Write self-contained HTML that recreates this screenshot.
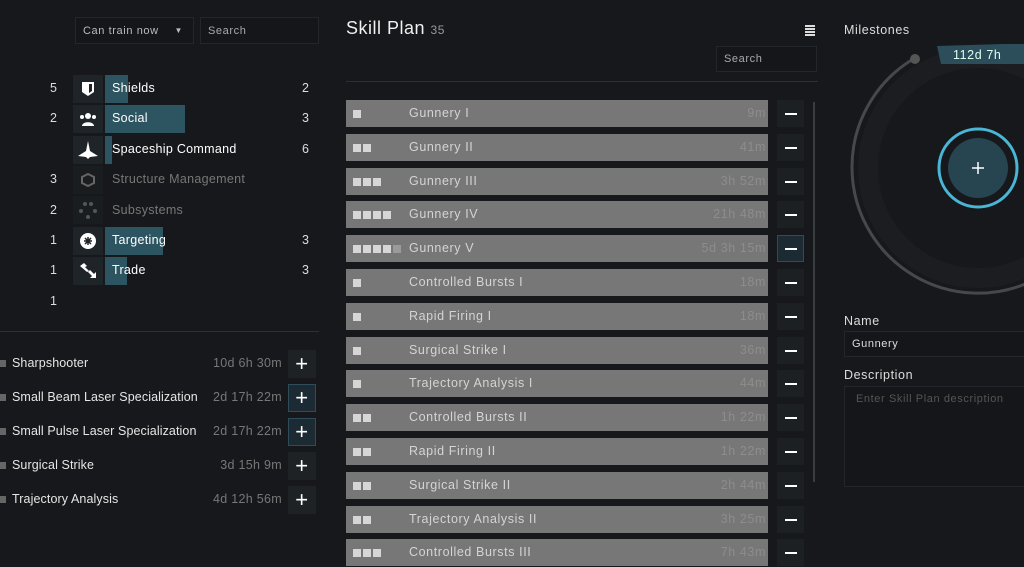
<!DOCTYPE html>
<html><head><style>
*{margin:0;padding:0;box-sizing:border-box}
body{width:1024px;height:567px;background:#16181b;font-family:"Liberation Sans",sans-serif;color:#dcdcdc;position:relative;overflow:hidden;font-size:12px;letter-spacing:.6px}
.a{position:absolute}
.inp{border:1px solid #23262a;background:#141619;color:#aaa;font-size:11px;padding-left:7px;display:flex;align-items:center}
.ic{position:absolute;left:73px;width:30px;height:28px;background:#1f2428;display:flex;align-items:center;justify-content:center;color:#fff;font-size:15px}
.bar{position:absolute;left:105px;height:28px;background:#2d5461}
.cl{position:absolute;left:112px;font-size:12.5px;color:#fff;letter-spacing:.3px}
.num{position:absolute;font-size:12.5px;color:#ddd}
.row{position:absolute;left:346px;width:422px;height:27px;background:#777;}
.row .n{position:absolute;left:63px;top:6px;color:#d4d4d4;font-size:12.5px}
.row .t{position:absolute;right:2px;top:6px;color:#8d8d8d;font-size:12.5px}
.row .sq{position:absolute;top:10px;width:8px;height:8px;background:#d6d6d6}
.mb{position:absolute;left:777px;width:27px;height:27px;background:#1d2023;display:flex;align-items:center;justify-content:center}
.mb i{width:12px;height:2px;background:#fff}
.bl{position:absolute;left:12px;font-size:12.5px;color:#e6e6e6;letter-spacing:.1px}
.bt{position:absolute;right:742px;font-size:12.5px;color:#777;letter-spacing:.3px}
.pb{position:absolute;left:288px;width:28px;height:28px;background:#1e2225;color:#fff;font-size:22px;display:flex;align-items:center;justify-content:center}
.bsq{position:absolute;left:0;width:6px;height:7px;background:#666}
</style></head><body>
<div class="a inp" style="left:75px;top:17px;width:119px;height:27px;color:#bbb">Can train now<span style="position:absolute;right:10px;font-size:8px">▼</span></div>
<div class="a inp" style="left:200px;top:17px;width:119px;height:27px">Search</div>

<div class="bar" style="top:75px;width:23px"></div>
<div class="bar" style="top:105px;width:80px"></div>
<div class="bar" style="top:136px;width:7px"></div>
<div class="bar" style="top:227px;width:58px"></div>
<div class="bar" style="top:257px;width:22px"></div>
<div class="ic" style="top:75px"><svg width="14" height="16"><path d="M1 1h12v10l-6 4-6-4z" fill="#fff"/><path d="M8 3h3v7l-3 2z" fill="#1f2428"/></svg></div>
<div class="ic" style="top:105px"><svg width="18" height="14" fill="#fff"><circle cx="9" cy="4" r="3"/><path d="M3 14c0-5 12-5 12 0z"/><circle cx="3" cy="5" r="2"/><circle cx="15" cy="5" r="2"/></svg></div>
<div class="ic" style="top:136px"><svg width="20" height="18" fill="#fff"><path d="M10 0l2 10 8 5-8 1-2 2-2-2-8-1 8-5z"/></svg></div>
<div class="ic" style="top:166px;background:#1a1d20"><svg width="14" height="14" fill="none" stroke="#666" stroke-width="2"><path d="M7 1l6 3v6l-6 3-6-3V4z"/></svg></div>
<div class="ic" style="top:196px;background:#1a1d20"><svg width="18" height="18" fill="#555"><circle cx="6" cy="3" r="2"/><circle cx="12" cy="3" r="2"/><circle cx="2" cy="10" r="2"/><circle cx="16" cy="10" r="2"/><circle cx="9" cy="16" r="2"/></svg></div>
<div class="ic" style="top:227px"><svg width="16" height="16"><circle cx="8" cy="8" r="8" fill="#fff"/><path d="M8 4v8M4 8h8M5 5l6 6M11 5l-6 6" stroke="#1f2428" stroke-width="1.5"/></svg></div>
<div class="ic" style="top:257px"><svg width="18" height="16" fill="#fff"><path d="M1 3l4-3 3 3-2 1 4 4-2 1z"/><path d="M17 9v6h-6l2-2-4-4 2-2 4 4z"/></svg></div>
<div class="cl" style="top:81px">Shields</div><div class="cl" style="top:111px">Social</div><div class="cl" style="top:142px">Spaceship Command</div>
<div class="cl" style="top:172px;color:#777">Structure Management</div><div class="cl" style="top:203px;color:#777">Subsystems</div>
<div class="cl" style="top:233px">Targeting</div><div class="cl" style="top:263px">Trade</div>
<div class="num" style="left:50px;top:81px">5</div><div class="num" style="left:50px;top:111px">2</div><div class="num" style="left:50px;top:172px">3</div><div class="num" style="left:50px;top:203px">2</div><div class="num" style="left:50px;top:233px">1</div><div class="num" style="left:50px;top:263px">1</div><div class="num" style="left:50px;top:294px">1</div>
<div class="num" style="left:302px;top:81px">2</div><div class="num" style="left:302px;top:111px">3</div><div class="num" style="left:302px;top:142px">6</div><div class="num" style="left:302px;top:233px">3</div><div class="num" style="left:302px;top:263px">3</div>
<div class="a" style="left:0;top:331px;width:319px;height:1px;background:#2a3236"></div>

<div class="bsq" style="top:360px"></div><div class="bl" style="top:356px">Sharpshooter</div><div class="bt" style="top:356px">10d 6h 30m</div><div class="pb" style="top:350px">+</div>
<div class="bsq" style="top:394px"></div><div class="bl" style="top:390px">Small Beam Laser Specialization</div><div class="bt" style="top:390px">2d 17h 22m</div><div class="pb" style="top:384px;background:#1b2a33;border:1px solid #2f4c5a">+</div>
<div class="bsq" style="top:428px"></div><div class="bl" style="top:424px">Small Pulse Laser Specialization</div><div class="bt" style="top:424px">2d 17h 22m</div><div class="pb" style="top:418px;background:#1b2a33;border:1px solid #2f4c5a">+</div>
<div class="bsq" style="top:462px"></div><div class="bl" style="top:458px">Surgical Strike</div><div class="bt" style="top:458px">3d 15h 9m</div><div class="pb" style="top:452px">+</div>
<div class="bsq" style="top:496px"></div><div class="bl" style="top:492px">Trajectory Analysis</div><div class="bt" style="top:492px">4d 12h 56m</div><div class="pb" style="top:486px">+</div>

<div class="a" style="left:346px;top:18px;font-size:18px;color:#f0f0f0;letter-spacing:.5px">Skill Plan <span style="font-size:12px;color:#999">35</span></div>
<div class="a" style="left:805px;top:25px;width:10px"><div style="height:2px;background:#ddd;margin-bottom:1px"></div><div style="height:2px;background:#ddd;margin-bottom:1px"></div><div style="height:2px;background:#ddd;margin-bottom:1px"></div><div style="height:2px;background:#ddd"></div></div>
<div class="a inp" style="left:716px;top:46px;width:101px;height:26px">Search</div>
<div class="a" style="left:346px;top:81px;width:472px;height:1px;background:#283236"></div>
<div class="a" style="left:813px;top:102px;width:2px;height:380px;background:#3a3d40"></div>

<div id="rows"></div>
<script>
var d=[["Gunnery I","9m",1],["Gunnery II","41m",2],["Gunnery III","3h 52m",3],["Gunnery IV","21h 48m",4],["Gunnery V","5d 3h 15m",5],["Controlled Bursts I","18m",1],["Rapid Firing I","18m",1],["Surgical Strike I","36m",1],["Trajectory Analysis I","44m",1],["Controlled Bursts II","1h 22m",2],["Rapid Firing II","1h 22m",2],["Surgical Strike II","2h 44m",2],["Trajectory Analysis II","3h 25m",2],["Controlled Bursts III","7h 43m",3]];
var h="";d.forEach(function(r,i){var y=Math.round(100+i*33.8);var s="";for(var k=0;k<r[2];k++){s+='<div class="sq" style="left:'+(7+k*10)+'px;'+(k==4?'background:#9a9a9a':'')+'"></div>';}
h+='<div class="row" style="top:'+y+'px">'+s+'<div class="n">'+r[0]+'</div><div class="t">'+r[1]+'</div></div>';
h+='<div class="mb" style="top:'+y+'px;'+(i==4?'background:#1b2a33;border:1px solid #2f4c5a':'')+'"><i></i></div>';});
document.getElementById("rows").innerHTML=h;
</script>

<div class="a" style="left:844px;top:23px;font-size:12.5px;color:#ddd">Milestones</div>
<svg class="a" style="left:833px;top:40px" width="191" height="270">
<circle cx="145" cy="128" r="110" fill="none" stroke="#1b1d20" stroke-width="20"/>
<path d="M82 18 A126 126 0 1 0 271 128" fill="none" stroke="#46484b" stroke-width="3"/>
<circle cx="82" cy="19" r="5" fill="#555"/>
<path d="M104 6 L170 4 L191 4 L191 24 L108 24 Z" fill="#2b4e5a"/>
<text x="120" y="19" fill="#dfe" font-size="12.5" font-family="Liberation Sans" letter-spacing=".6">112d 7h</text>
<circle cx="145" cy="128" r="39" fill="none" stroke="#49b6d6" stroke-width="3"/>
<circle cx="145" cy="128" r="30" fill="#274550"/>
<path d="M145 122v12M139 128h12" stroke="#fff" stroke-width="1.5"/>
</svg>
<div class="a" style="left:844px;top:314px;font-size:12.5px;color:#ddd">Name</div>
<div class="a inp" style="left:844px;top:331px;width:190px;height:26px;color:#ddd">Gunnery</div>
<div class="a" style="left:844px;top:368px;font-size:12.5px;color:#ddd">Description</div>
<div class="a" style="left:844px;top:386px;width:190px;height:101px;border:1px solid #23262a;background:#141619;color:#555;font-size:11px;padding:6px 11px">Enter Skill Plan description</div>
</body></html>
